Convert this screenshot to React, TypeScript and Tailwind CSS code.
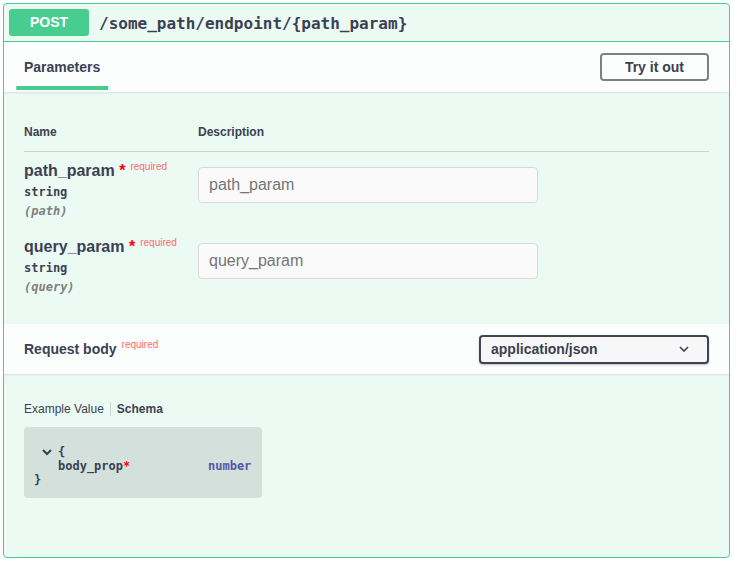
const mono = "font-['DejaVu_Sans_Mono',monospace]";

function Param({ name, type, where }: { name: string; type: string; where: string }) {
  return (
    <div className="flex pt-[9px] pb-[10px]">
      <div className="w-[174px] shrink-0">
        <div className="text-[16px] leading-[20px] font-bold whitespace-nowrap">
          {name}
          <span className="text-[#ff0000]">&nbsp;*</span>
          <span className="relative -top-[6px] px-[5px] text-[10px] leading-none font-normal text-[#ff0000]/60">required</span>
        </div>
        <div className={`${mono} mt-[4px] text-[12px] leading-[14px] font-semibold`}>{type}</div>
        <div className={`${mono} mt-[5px] text-[12px] leading-[14px] font-semibold italic text-[#808080]`}>({where})</div>
      </div>
      <div className="pt-[6px]">
        <input
          placeholder={name}
          className="h-[36px] w-[340px] rounded-[4px] border border-[#d9d9d9] bg-[#fafafa] px-[10px] text-[16px] text-[#3b4151] placeholder:text-[#757575] outline-none"
        />
      </div>
    </div>
  );
}

export default function App() {
  return (
    <div className="w-[733px] h-[562px] bg-white p-[3px] font-['Liberation_Sans',Arial,sans-serif] text-[#3b4151]">
      <div className="h-[555px] overflow-hidden rounded-[4px] border border-[#49cc90] bg-[#49cc90]/10">
        {/* summary */}
        <div className="flex items-center border-b border-[#49cc90] p-[5px]">
          <span className="flex h-[27px] min-w-[80px] items-center justify-center rounded-[3px] bg-[#49cc90] px-[15px] text-[14px] font-bold text-white">
            POST
          </span>
          <span className={`${mono} px-[10px] pt-[2px] text-[16px] font-bold`}>/some_path/endpoint/{"{"}path_param{"}"}</span>
        </div>

        {/* parameters header */}
        <div className="flex min-h-[50px] items-center justify-between bg-white/80 px-[20px] shadow-[0_1px_2px_rgba(0,0,0,0.1)]">
          <h4 className="text-[14px] font-bold">
            <span className="relative after:absolute after:left-1/2 after:-bottom-[15px] after:h-[4px] after:w-[120%] after:-translate-x-1/2 after:bg-[#49cc90] after:content-['']">
              Parameters
            </span>
          </h4>
          <button className="h-[28px] rounded-[4px] border-2 border-[#808080] px-[23px] text-[14px] font-bold">Try it out</button>
        </div>

        {/* parameters table */}
        <div className="px-[20px] pt-[21px] pb-[20px]">
          <div className="flex border-b border-[#3b4151]/20 py-[12px] text-[12px] leading-[14px] font-bold">
            <div className="w-[174px]">Name</div>
            <div>Description</div>
          </div>
          <Param name="path_param" type="string" where="path" />
          <Param name="query_param" type="string" where="query" />
        </div>

        {/* request body header */}
        <div className="flex min-h-[50px] items-center justify-between bg-white/80 px-[20px] shadow-[0_1px_2px_rgba(0,0,0,0.1)]">
          <h4 className="text-[14px] font-bold">
            Request body
            <span className="relative -top-[6px] px-[5px] text-[10px] leading-none font-normal text-[#ff0000]/60">required</span>
          </h4>
          <div className="flex h-[29px] w-[230px] items-center justify-between rounded-[4px] border-2 border-[#41444e] bg-[#f7f7f7] pl-[10px] pr-[18px] text-[14px] font-bold shadow-[0_1px_2px_rgba(0,0,0,0.25)]">
            application/json
            <svg width="10" height="6" viewBox="0 0 10 6" fill="none" stroke="#3b4151" strokeWidth="1.6">
              <path d="M1 1l4 4 4-4" />
            </svg>
          </div>
        </div>

        {/* body */}
        <div className="px-[20px] pt-[28px]">
          <div className="flex items-center text-[12px] leading-[14px]">
            <span className="pr-[6px]">Example Value</span>
            <span className="h-[14px] w-px bg-[#3b4151]/20" />
            <span className="pl-[6px] font-bold">Schema</span>
          </div>
          <div className={`${mono} mt-[11px] w-[238px] rounded-[4px] bg-black/10 px-[10px] pt-[18px] pb-[11px] text-[12px] leading-[14px] font-semibold`}>
            <div className="flex items-center">
              <svg className="ml-[8px] mr-[6px]" width="10" height="7" viewBox="0 0 10 7" fill="none" stroke="#3b4151" strokeWidth="2">
                <path d="M1 1l4 4 4-4" />
              </svg>
              <span>{"{"}</span>
            </div>
            <div className="flex pl-[24px]">
              <span className="w-[150px]">
                body_prop<span className="text-[#ff0000]">*</span>
              </span>
              <span className="text-[#55a]">number</span>
            </div>
            <div>{"}"}</div>
          </div>
        </div>
      </div>
    </div>
  );
}
